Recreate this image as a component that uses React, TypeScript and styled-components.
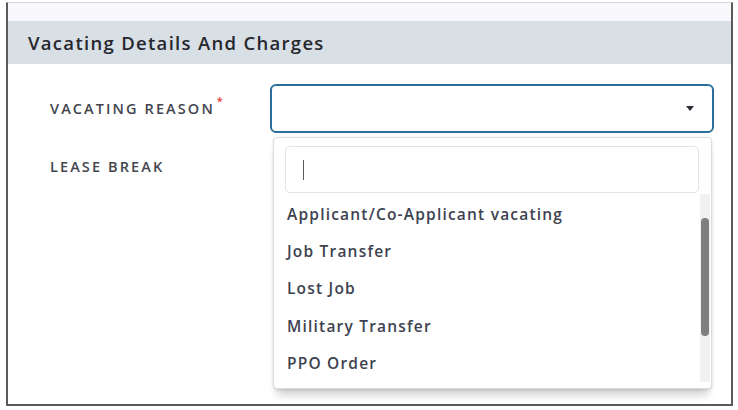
import React from "react";
import styled, { createGlobalStyle } from "styled-components";

const Global = createGlobalStyle`
  html, body { margin: 0; padding: 0; background: #ffffff; }
  body { font-family: "Open Sans", "Liberation Sans", sans-serif; }
  * { box-sizing: border-box; }
`;

const Page = styled.div`
  width: 738px;
  height: 410px;
  padding: 2px 5px 4px 6px;
`;

const Frame = styled.div`
  height: 404px;
  border: 2px solid #5a5a5a;
  border-top: 1px solid #d6d6d6;
  display: flex;
  flex-direction: column;
`;

const TopStrip = styled.div`
  height: 18px;
  background: #f8f8fd;
`;

const SectionHeader = styled.div`
  height: 43px;
  background: #d8dfe5;
  display: flex;
  align-items: center;
  padding-left: 20px;
  font-size: 18.5px;
  font-weight: 600;
  letter-spacing: 1.3px;
  color: #26272e;
`;

const Body = styled.div`
  padding: 20px 17px 0 42px;
  display: flex;
  flex-direction: column;
  gap: 9px;
`;

const Row = styled.div`
  display: grid;
  grid-template-columns: 220px 444px;
  height: 49px;
  align-items: center;
`;

const Label = styled.div`
  font-size: 14.5px;
  font-weight: 600;
  color: #44464f;
  letter-spacing: 2.1px;
  white-space: nowrap;
`;

const Required = styled.span`
  color: #e8322f;
  font-size: 11px;
  position: relative;
  top: -9px;
  margin-left: 2px;
  line-height: 0;
`;

const SelectWrap = styled.div`
  position: relative;
  height: 49px;
`;

const SelectBox = styled.div`
  height: 49px;
  border: 2px solid #2a6f9c;
  border-radius: 6px;
  display: flex;
  align-items: center;
  justify-content: flex-end;
  padding-right: 18px;
  background: #fff;
`;

const Caret = styled.span`
  width: 0;
  height: 0;
  border-left: 4.5px solid transparent;
  border-right: 4.5px solid transparent;
  border-top: 5px solid #2c2f36;
`;

const Menu = styled.div`
  position: absolute;
  top: 53px;
  left: 3px;
  width: 439px;
  height: 252px;
  background: #fff;
  border: 1px solid #dcdcdc;
  border-radius: 4px;
  box-shadow: 0 1px 3px rgba(0, 0, 0, 0.12), 0 10px 8px -4px rgba(0, 0, 0, 0.18);
  padding: 8px 0 6px 0;
  display: flex;
  flex-direction: column;
  z-index: 5;
`;

const Search = styled.div`
  margin: 0 12px 0 11px;
  height: 47px;
  border: 1px solid #e3e3e6;
  border-radius: 5px;
  display: flex;
  align-items: center;
  padding-left: 17px;
`;

const TextCursor = styled.span`
  width: 1px;
  height: 20px;
  background: #5a5a5a;
`;

const ListArea = styled.div`
  flex: 1;
  display: flex;
  margin-top: 1px;
`;

const Options = styled.div`
  flex: 1;
  display: flex;
  flex-direction: column;
  padding-top: 1px;
`;

const Option = styled.div`
  height: 37.4px;
  display: flex;
  align-items: center;
  padding-left: 13px;
  font-size: 15.5px;
  font-weight: 600;
  letter-spacing: 1.2px;
  color: #3d4250;
  white-space: nowrap;
`;

const ScrollTrack = styled.div`
  width: 10px;
  margin-right: 1px;
  background: #f1f1f1;
  padding: 24px 1px 0 1px;
`;

const ScrollThumb = styled.div`
  height: 118px;
  background: #7f7f7f;
  border-radius: 4px;
`;

const options = [
  "Applicant/Co-Applicant vacating",
  "Job Transfer",
  "Lost Job",
  "Military Transfer",
  "PPO Order",
];

export default function App() {
  return (
    <>
      <Global />
      <Page>
        <Frame>
          <TopStrip />
          <SectionHeader>Vacating Details And Charges</SectionHeader>
          <Body>
            <Row>
              <Label>
                VACATING REASON<Required>*</Required>
              </Label>
              <SelectWrap>
                <SelectBox>
                  <Caret />
                </SelectBox>
                <Menu>
                  <Search>
                    <TextCursor />
                  </Search>
                  <ListArea>
                    <Options>
                      {options.map((o) => (
                        <Option key={o}>{o}</Option>
                      ))}
                    </Options>
                    <ScrollTrack>
                      <ScrollThumb />
                    </ScrollTrack>
                  </ListArea>
                </Menu>
              </SelectWrap>
            </Row>
            <Row>
              <Label>LEASE BREAK</Label>
              <div />
            </Row>
          </Body>
        </Frame>
      </Page>
    </>
  );
}
